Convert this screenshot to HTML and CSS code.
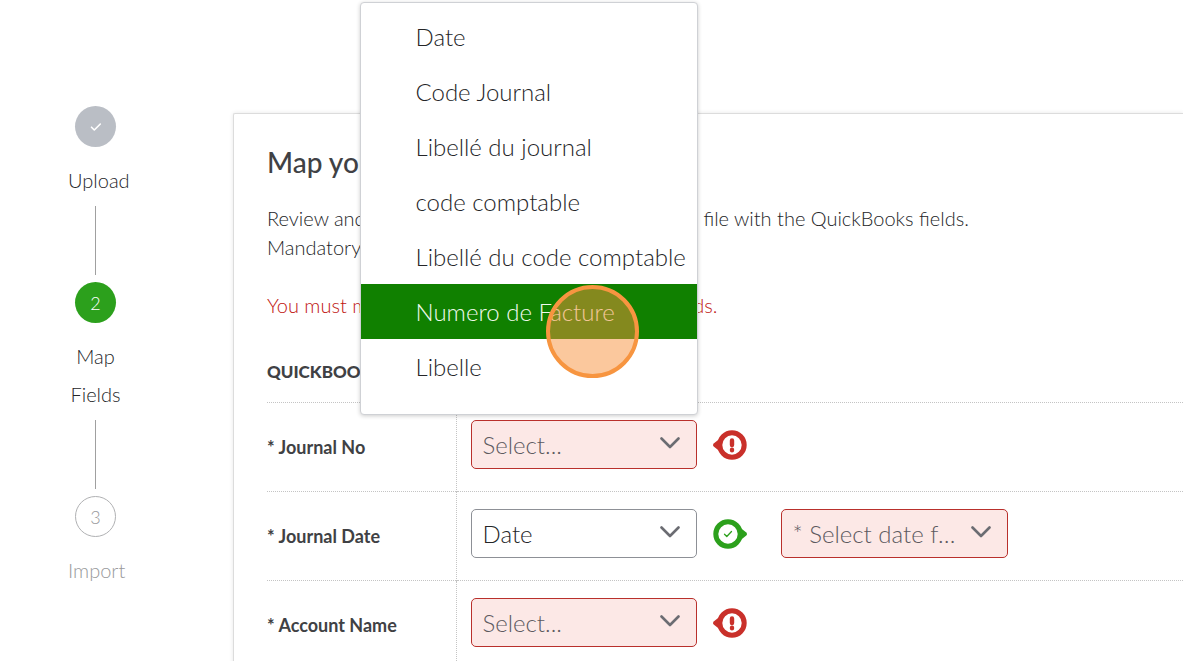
FILE: index.html
```html
<!DOCTYPE html>
<html lang="en">
<head>
  <meta charset="utf-8">
  <title>Import journal entries</title>
  <link rel="stylesheet" href="styles.css">
</head>
<body>
  <div class="page">
    <ol class="steps">
      <li class="step done">
        <span class="circle">
          <svg width="12" height="10" viewBox="0 0 12 10"><path d="M1.5 5.2 4.3 8 10.3 2" fill="none" stroke="#fff" stroke-width="1.6" stroke-linecap="round" stroke-linejoin="round"/></svg>
        </span>
        <span class="step-label">Upload</span>
      </li>
      <li class="step current">
        <span class="circle">2</span>
        <span class="step-label">Map Fields</span>
      </li>
      <li class="step todo">
        <span class="circle">3</span>
        <span class="step-label">Import</span>
      </li>
    </ol>

    <main class="card">
      <h1>Map your headings</h1>
      <p>Review and update the headings from your import file with the QuickBooks fields.<br>Mandatory fields are marked with *</p>
      <p class="error">You must map all your mandatory QuickBooks fields.</p>

      <table>
        <thead>
          <tr>
            <th class="name" scope="col">QUICKBOOKS FIELDS</th>
            <th scope="col"></th>
          </tr>
        </thead>
        <tbody>
          <tr>
            <th class="name" scope="row"><label for="journal-no">* Journal No</label></th>
            <td>
              <div class="fields">
                <div class="select invalid">
                  <select id="journal-no"><option>Select...</option></select>
                  <svg class="chevron" width="20" height="12" viewBox="0 0 20 12"><path d="M1.5 1.5 10 10 18.500 1.500"/></svg>
                  <ul class="menu" role="listbox">
                    <li role="option">Date</li>
                    <li role="option">Code Journal</li>
                    <li role="option">Libellé du journal</li>
                    <li role="option">code comptable</li>
                    <li role="option">Libellé du code comptable</li>
                    <li role="option" class="active" aria-selected="true">Numero de Facture<span class="click"></span></li>
                    <li role="option">Libelle</li>
                    <li role="option">mode de règlement</li>
                  </ul>
                </div>
                <svg class="status" width="34" height="30" viewBox="0 0 34 30">
                  <path d="M10 6 1 13.200Q-1 15 1 16.800L10 24Z" fill="#c9302a"/>
                  <circle cx="19" cy="15" r="12.200" fill="#fff" stroke="#c9302a" stroke-width="5"/>
                  <path d="M19 10.500v4.500M19 19.800v.4" stroke="#c9302a" stroke-width="4.400" stroke-linecap="round"/>
                </svg>
              </div>
            </td>
          </tr>
          <tr>
            <th class="name" scope="row"><label for="journal-date">* Journal Date</label></th>
            <td>
              <div class="fields">
                <div class="select">
                  <select id="journal-date"><option>Date</option></select>
                  <svg class="chevron" width="20" height="12" viewBox="0 0 20 12"><path d="M1.5 1.5 10 10 18.500 1.500"/></svg>
                </div>
                <svg class="status" width="34" height="30" viewBox="0 0 34 30">
                  <path d="M24 6 33 13.200Q35 15 33 16.800L24 24Z" fill="#2ca01c"/>
                  <circle cx="15" cy="15" r="12.200" fill="#fff" stroke="#2ca01c" stroke-width="5"/>
                  <path d="M11.500 15.200 13.800 17.500 18.500 12.500" fill="none" stroke="#2ca01c" stroke-width="1.300" stroke-linecap="round" stroke-linejoin="round"/>
                </svg>
                <div class="select invalid format">
                  <select aria-label="Date format"><option>* Select date format</option></select>
                  <svg class="chevron" width="20" height="12" viewBox="0 0 20 12"><path d="M1.5 1.5 10 10 18.500 1.500"/></svg>
                </div>
              </div>
            </td>
          </tr>
          <tr>
            <th class="name" scope="row"><label for="account-name">* Account Name</label></th>
            <td>
              <div class="fields">
                <div class="select invalid">
                  <select id="account-name"><option>Select...</option></select>
                  <svg class="chevron" width="20" height="12" viewBox="0 0 20 12"><path d="M1.5 1.5 10 10 18.500 1.500"/></svg>
                </div>
                <svg class="status" width="34" height="30" viewBox="0 0 34 30">
                  <path d="M10 6 1 13.200Q-1 15 1 16.800L10 24Z" fill="#c9302a"/>
                  <circle cx="19" cy="15" r="12.200" fill="#fff" stroke="#c9302a" stroke-width="5"/>
                  <path d="M19 10.500v4.500M19 19.800v.4" stroke="#c9302a" stroke-width="4.400" stroke-linecap="round"/>
                </svg>
              </div>
            </td>
          </tr>
        </tbody>
      </table>
    </main>
  </div>
</body>
</html>
```
FILE: styles.css
```css
* {
  box-sizing: border-box;
}
body {
  margin: 0;
  font-family: Lato, sans-serif;
  font-size: 20px;
  font-weight: 300;
  color: #242528;
  background: #fff;
}
.page {
  display: flex;
  height: 100vh;
  overflow: hidden;
}

/* steps on the left */
.steps {
  flex: none;
  width: 233px;
  margin: 0;
  padding: 106px 0 0 68px;
  list-style: none;
}
.step {
  display: flex;
  flex-direction: column;
  align-items: center;
  width: 55px;
  line-height: 38px;
}
.circle {
  display: flex;
  align-items: center;
  justify-content: center;
  width: 41px;
  height: 41px;
  margin-bottom: 14px;
  border-radius: 50%;
  font-size: 18px;
}
.step-label {
  width: 55px;
  text-align: center;
}
.step:not(:last-child)::after {
  content: "";
  width: 1px;
  height: 69px;
  margin: 7px 0;
  background: #a0a0a0;
}
.done .circle {
  background: #babec5;
}
.current .circle {
  background: #2ca01c;
  color: #fff;
}
.todo {
  color: #98999b;
}
.todo .circle {
  border: 1px solid #b0b1b3;
}

/* mapping card */
.card {
  flex: 1;
  min-width: 0;
  height: 700px;
  margin-top: 113px;
  padding: 30px 0 0 33px;
  border: 1px solid #dcdcdc;
  border-right: none;
  border-radius: 2px 0 0 0;
  box-shadow: 0 0 4px rgba(0, 0, 0, 0.1);
}
h1 {
  margin: 0 0 24px;
  font-size: 28px;
  line-height: 36px;
  font-weight: 500;
  color: #404144;
}
p {
  margin: 0 0 29px;
  line-height: 29px;
}
.error {
  margin-bottom: 31px;
  color: #c01410;
}
table {
  width: 100%;
  border-collapse: collapse;
}
th,
td {
  padding: 0;
  text-align: left;
}
.name {
  width: 189px;
  font-size: 18px;
  white-space: nowrap;
  color: #404144;
}
thead .name {
  height: 51px;
  padding-bottom: 10px;
  font-size: 17px;
  font-weight: 900;
}
tbody tr {
  height: 89px;
  border-top: 1px dotted #c4c4c4;
}
td {
  padding: 0 0 4px 14px;
  border-left: 1px dotted #c4c4c4;
}

/* drop-downs */
.fields {
  display: flex;
  align-items: center;
}
.select {
  position: relative;
  width: 226px;
}
select {
  display: block;
  width: 100%;
  height: 49px;
  padding: 0 48px 0 11px;
  appearance: none;
  border: 1px solid #8d9096;
  border-radius: 5px;
  background: #fff;
  color: #242528;
  font: 300 24px Lato, sans-serif;
  text-overflow: ellipsis;
}
.invalid select {
  border-color: #b9302c;
  background: #fce8e6;
  color: #5c5a5f;
}
.chevron {
  position: absolute;
  top: 17px;
  right: 17px;
  fill: none;
  stroke: #6b6c72;
  stroke-width: 2.6;
  stroke-linecap: round;
  stroke-linejoin: round;
  pointer-events: none;
}
.status {
  flex: none;
  margin-left: 16px;
}
.format {
  width: 227px;
  margin-left: 34px;
}

/* open menu */
.menu {
  position: absolute;
  right: -1px;
  bottom: 54px;
  z-index: 1;
  width: 338px;
  height: 413px;
  margin: 0;
  padding: 6px 0;
  overflow: hidden;
  list-style: none;
  border: 1px solid #cfd1d5;
  border-radius: 4px;
  background: #fff;
  box-shadow: 0 1px 4px rgba(0, 0, 0, 0.2);
}
.menu li {
  height: 55px;
  padding-left: 55px;
  font-size: 24px;
  line-height: 56px;
  white-space: nowrap;
}
.menu .active {
  position: relative;
  background: #108000;
  color: #f0faee;
}
.click {
  position: absolute;
  top: 1px;
  left: 185px;
  width: 93px;
  height: 93px;
  border: 4px solid #f79540;
  border-radius: 50%;
  background: rgba(247, 146, 60, 0.5);
}
```
